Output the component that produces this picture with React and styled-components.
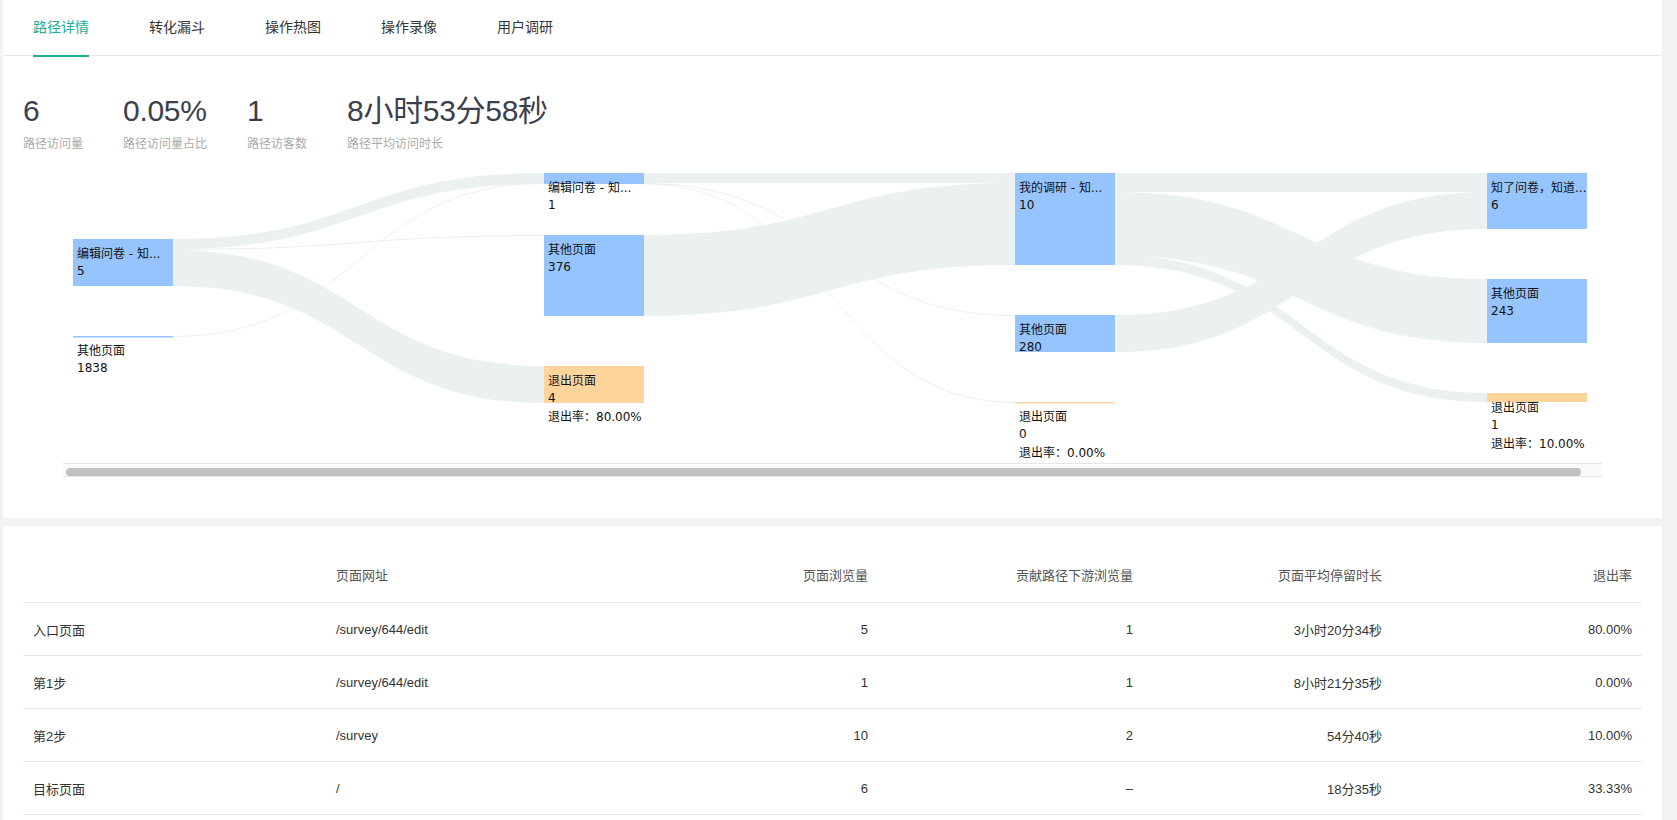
import React from "react";
import styled, { createGlobalStyle } from "styled-components";

const GlobalStyle = createGlobalStyle`
  body {
    margin: 0;
    background: #f2f2f2;
    font-family: "Liberation Sans", "Noto Sans CJK SC", sans-serif;
  }
`;

const COLS = [10, 481, 952, 1424];
const NODE_W = 100;
const BLUE = "#95c4fe";
const ORANGE = "#fed49d";
const VIEW_W = 1539;
const CONTENT_W = 1555;

const nodes = [
  { c: 0, y: 74, h: 47, fill: BLUE, lines: ["编辑问卷 - 知...", "5"] },
  { c: 0, y: 171, h: 1.5, fill: BLUE, lines: ["其他页面", "1838"] },
  { c: 1, y: 8, h: 11, fill: BLUE, lines: ["编辑问卷 - 知...", "1"] },
  { c: 1, y: 70, h: 81, fill: BLUE, lines: ["其他页面", "376"] },
  { c: 1, y: 201, h: 37, fill: ORANGE, lines: ["退出页面", "4"], rate: "退出率：80.00%" },
  { c: 2, y: 8, h: 92, fill: BLUE, lines: ["我的调研 - 知...", "10"] },
  { c: 2, y: 150, h: 37, fill: BLUE, lines: ["其他页面", "280"] },
  { c: 2, y: 237, h: 1.5, fill: ORANGE, lines: ["退出页面", "0"], rate: "退出率：0.00%" },
  { c: 3, y: 8, h: 56, fill: BLUE, lines: ["知了问卷，知道...", "6"] },
  { c: 3, y: 114, h: 64, fill: BLUE, lines: ["其他页面", "243"] },
  { c: 3, y: 228, h: 9, fill: ORANGE, lines: ["退出页面", "1"], rate: "退出率：10.00%" },
];

// [fromCol, sy0, sy1, ty0, ty1]
const links = [
  [0, 74, 84, 8, 19],
  [0, 84, 85, 70, 71],
  [0, 85, 121, 201, 238],
  [0, 171, 172, 18, 19],
  [1, 8, 18, 8, 18],
  [1, 18, 19, 150, 151],
  [1, 18.5, 19.5, 237, 238],
  [1, 70, 151, 18, 100],
  [2, 8, 27, 8, 27],
  [2, 27, 90, 114, 177],
  [2, 90, 91, 177, 178],
  [2, 90.5, 100, 228, 237],
  [2, 150, 187, 27, 64],
];

function linkPath([c, sy0, sy1, ty0, ty1]) {
  const sx = COLS[c] + NODE_W;
  const tx = COLS[c + 1];
  const mx = (sx + tx) / 2;
  return `M${sx},${sy0} C${mx},${sy0} ${mx},${ty0} ${tx},${ty0} L${tx},${ty1} C${mx},${ty1} ${mx},${sy1} ${sx},${sy1} Z`;
}

export default function App() {
  // thumb length follows the visible / total width ratio
  const thumbW = Math.round(((VIEW_W - 6) * VIEW_W) / CONTENT_W) - 2;

  return (
    <>
      <GlobalStyle />
      <Page>
        <TopPanel>
          <TabBar>
            {["路径详情", "转化漏斗", "操作热图", "操作录像", "用户调研"].map((t, i) => (
              <Tab key={t} $active={i === 0}>
                {t}
              </Tab>
            ))}
          </TabBar>

          <Stats>
            <Stat>
              <StatValue>6</StatValue>
              <StatLabel>路径访问量</StatLabel>
            </Stat>
            <Stat>
              <StatValue>0.05%</StatValue>
              <StatLabel>路径访问量占比</StatLabel>
            </Stat>
            <Stat>
              <StatValue>1</StatValue>
              <StatLabel>路径访客数</StatLabel>
            </Stat>
            <Stat>
              <StatValue>8小时53分58秒</StatValue>
              <StatLabel>路径平均访问时长</StatLabel>
            </Stat>
          </Stats>

          <ChartBox>
            <ChartViewport>
              <Sankey width={CONTENT_W} height="298">
                {links.map((l, i) => (
                  <path key={i} d={linkPath(l)} fill="#eaf1f0" />
                ))}
                {nodes.map((n, i) => {
                  const x = COLS[n.c];
                  return (
                    <g key={i}>
                      <rect x={x} y={n.y} width={NODE_W} height={n.h} fill={n.fill} />
                      <text x={x + 4} y={n.y + 19}>{n.lines[0]}</text>
                      <text x={x + 4} y={n.y + 36}>{n.lines[1]}</text>
                      {n.rate && (
                        <text x={x + 4} y={n.y + 55}>{n.rate}</text>
                      )}
                    </g>
                  );
                })}
              </Sankey>
            </ChartViewport>
            <ScrollTrack>
              <ScrollThumb style={{ width: thumbW }} />
            </ScrollTrack>
          </ChartBox>
        </TopPanel>

        <TablePanel>
          <Table>
            <colgroup>
              <col width="303" />
              <col width="300" />
              <col width="252" />
              <col width="265" />
              <col width="249" />
              <col width="250" />
            </colgroup>
            <thead>
              <tr>
                <Th />
                <Th>页面网址</Th>
                <Th $right>页面浏览量</Th>
                <Th $right>贡献路径下游浏览量</Th>
                <Th $right>页面平均停留时长</Th>
                <Th $right>退出率</Th>
              </tr>
            </thead>
            <tbody>
              {[
                ["入口页面", "/survey/644/edit", "5", "1", "3小时20分34秒", "80.00%"],
                ["第1步", "/survey/644/edit", "1", "1", "8小时21分35秒", "0.00%"],
                ["第2步", "/survey", "10", "2", "54分40秒", "10.00%"],
                ["目标页面", "/", "6", "–", "18分35秒", "33.33%"],
              ].map((row) => (
                <tr key={row[0]}>
                  {row.map((cell, i) => (
                    <Td key={i} $right={i > 1}>
                      {cell}
                    </Td>
                  ))}
                </tr>
              ))}
            </tbody>
          </Table>
        </TablePanel>
      </Page>
    </>
  );
}

const Page = styled.div`
  width: 1659px;
  margin-left: 3px;
`;

const TopPanel = styled.section`
  background: #fff;
  height: 518px;
  box-sizing: border-box;
`;

const TabBar = styled.nav`
  display: flex;
  gap: 60px;
  height: 56px;
  padding-left: 30px;
  box-sizing: border-box;
  border-bottom: 1px solid #e8e8e8;
`;

const Tab = styled.div`
  height: 57px;
  line-height: 54px;
  box-sizing: border-box;
  font-size: 14px;
  color: ${(p) => (p.$active ? "#1aad94" : "#333")};
  border-bottom: 2px solid ${(p) => (p.$active ? "#1aad94" : "transparent")};
  cursor: pointer;
`;

const Stats = styled.div`
  display: flex;
  gap: 40px;
  padding: 40px 20px 0;
`;

const Stat = styled.div`
  display: flex;
  flex-direction: column;
`;

const StatValue = styled.div`
  font-size: 30px;
  line-height: 30px;
  color: #3b404c;
  white-space: nowrap;
  letter-spacing: -0.3px;
`;

const StatLabel = styled.div`
  margin-top: 10px;
  font-size: 12px;
  line-height: 16px;
  color: #aaa;
`;

const ChartBox = styled.div`
  margin: 13px 0 0 60px;
  width: ${VIEW_W}px;
`;

const ChartViewport = styled.div`
  height: 298px;
  overflow: hidden;
`;

const ScrollTrack = styled.div`
  height: 14px;
  padding: 3px;
  box-sizing: border-box;
  background: #fafafa;
  border-top: 1px solid #e6e6e6;
  border-bottom: 1px solid #e6e6e6;
`;

const ScrollThumb = styled.div`
  height: 8px;
  margin-top: 1px;
  border-radius: 4px;
  background: #c1c1c1;
`;

const Sankey = styled.svg`
  display: block;

  text {
    font-family: "DejaVu Sans", "Noto Sans CJK SC", sans-serif;
    font-size: 12px;
    fill: #111;
  }
`;

const TablePanel = styled.section`
  margin-top: 8px;
  background: #fff;
  padding: 20px 20px 0;
  height: 294px;
  box-sizing: border-box;
`;

const Table = styled.table`
  width: 1619px;
  border-collapse: collapse;
  table-layout: fixed;
  font-size: 13px;
`;

const Th = styled.th`
  height: 56px;
  padding: 0 10px;
  font-weight: normal;
  color: #555;
  text-align: ${(p) => (p.$right ? "right" : "left")};
  border-bottom: 1px solid #e8e8e8;
`;

const Td = styled.td`
  height: 52px;
  padding: 0 10px;
  color: #333;
  text-align: ${(p) => (p.$right ? "right" : "left")};
  border-bottom: 1px solid #e8e8e8;
`;
